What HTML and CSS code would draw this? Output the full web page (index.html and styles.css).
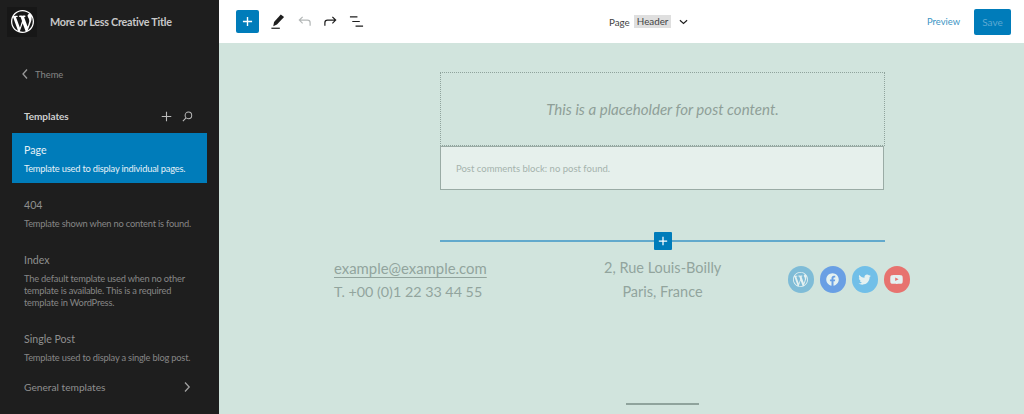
FILE: index.html
```html
<!DOCTYPE html>
<html lang="en">
<head>
<meta charset="utf-8">
<title>Site Editor</title>
<link rel="stylesheet" href="styles.css">
</head>
<body>
<div class="app">
  <aside class="sidebar">
    <div class="brand">
      <div class="logo-box">
        <svg class="logo" viewBox="0 0 20 20"><path fill="#fff" d="M20 10c0-5.51-4.49-10-10-10C4.48 0 0 4.49 0 10c0 5.52 4.48 10 10 10 5.51 0 10-4.48 10-10zM7.78 15.37L4.37 6.22c.55-.02 1.17-.08 1.17-.08.5-.06.44-1.13-.06-1.11 0 0-1.45.11-2.37.11-.18 0-.37 0-.58-.01C4.12 2.69 6.87 1.11 10 1.11c2.33 0 4.45.87 6.05 2.34-.68-.11-1.65.39-1.65 1.58 0 .74.45 1.36.9 2.1.35.61.55 1.36.55 2.46 0 1.49-1.4 5-1.4 5l-3.03-8.37c.54-.02.82-.17.82-.17.5-.05.44-1.25-.06-1.22 0 0-1.44.12-2.38.12-.87 0-2.33-.12-2.33-.12-.5-.03-.56 1.2-.06 1.22l.92.08 1.26 3.41zM17.41 10c.24-.64.74-1.87.43-4.25.7 1.29 1.05 2.71 1.05 4.25 0 3.29-1.73 6.24-4.4 7.78.97-2.59 1.94-5.2 2.92-7.78zM6.1 18.09C3.12 16.65 1.11 13.53 1.11 10c0-1.3.23-2.48.72-3.59C3.25 10.3 4.67 14.2 6.1 18.09zm4.03-6.63l2.58 6.98c-.86.29-1.76.45-2.71.45-.79 0-1.57-.11-2.29-.33.81-2.38 1.62-4.74 2.42-7.1z"/></svg>
      </div>
      <span class="site-title">More or Less Creative Title</span>
    </div>
    <div class="back">
      <svg class="back-icon" viewBox="0 0 8 12"><path d="M6 1.5 2 6l4 4.5" fill="none" stroke="#9a9a9a" stroke-width="1.3"/></svg>
      <span>Theme</span>
    </div>
    <div class="section-head">
      <span>Templates</span>
      <div class="section-actions">
        <svg class="sec-icon" viewBox="0 0 12 12"><path d="M6 .8v10.4M.8 6h10.400" stroke="#bbb" stroke-width="1.200" fill="none"/></svg>
        <svg class="sec-icon" viewBox="0 0 12 12"><circle cx="7" cy="4.800" r="3.600" fill="none" stroke="#bbb" stroke-width="1.100"/><path d="M4.400 7.500 1 11" stroke="#bbb" stroke-width="1.200"/></svg>
      </div>
    </div>
    <ul class="list">
      <li class="item selected"><div class="item-title">Page</div><p class="item-desc">Template used to display individual pages.</p></li>
      <li class="item"><div class="item-title">404</div><p class="item-desc">Template shown when no content is found.</p></li>
      <li class="item"><div class="item-title">Index</div><p class="item-desc">The default template used when no other template is available. This is a required template in WordPress.</p></li>
      <li class="item"><div class="item-title">Single Post</div><p class="item-desc">Template used to display a single blog post.</p></li>
    </ul>
    <div class="general">
      <span>General templates</span>
      <svg class="general-icon" viewBox="0 0 8 12"><path d="M2 1.500 6.200 6 2 10.500" fill="none" stroke="#a0a0a0" stroke-width="1.300"/></svg>
    </div>
  </aside>
  <main class="main">
    <header class="topbar">
      <div class="tools">
        <button class="add"><svg viewBox="0 0 12 12"><path d="M6 1v10M1 6h10" stroke="#fff" stroke-width="1.500" fill="none"/></svg></button>
        <svg class="tool pencil" viewBox="0 0 16 16"><path d="M11.500 .5 15 3.300 7.400 11.300 3.500 13l.8-4.400z" fill="#1e1e1e"/><path d="M1.500 15.200h9" stroke="#1e1e1e" stroke-width="1.300"/></svg>
        <svg class="tool undo" viewBox="0 0 16 16"><path d="M14 12.500V9.200C14 7.500 12.800 6.500 11.200 6.500H2.500M6 3 2.500 6.500 6 10" fill="none" stroke="#b4b8b8" stroke-width="1.300"/></svg>
        <svg class="tool redo" viewBox="0 0 16 16"><path d="M2 12.500V9.200C2 7.500 3.200 6.500 4.800 6.500h8.700M10 3l3.500 3.500L10 10" fill="none" stroke="#1e1e1e" stroke-width="1.300"/></svg>
        <svg class="tool listview" viewBox="0 0 16 16"><path d="M1 3h8M3.500 8h8M7 13h8" fill="none" stroke="#1e1e1e" stroke-width="1.300"/></svg>
      </div>
      <div class="doc">
        <span class="doc-page">Page</span>
        <span class="doc-tag">Header</span>
        <svg class="doc-chev" viewBox="0 0 10 6"><path d="M1 1l4 3.500L9 1" fill="none" stroke="#1e1e1e" stroke-width="1.300"/></svg>
      </div>
      <div class="actions">
        <span class="preview">Preview</span>
        <button class="save">Save</button>
      </div>
    </header>
    <section class="canvas">
      <div class="content">
        <div class="post-placeholder">This is a placeholder for post content.</div>
        <div class="comments">Post comments block: no post found.</div>
      </div>
      <div class="insert-line">
        <button class="insert-btn"><svg viewBox="0 0 12 12"><path d="M6 1v10M1 6h10" stroke="#fff" stroke-width="1.500" fill="none"/></svg></button>
      </div>
      <div class="footer">
        <div class="foot-left">
          <a class="email">example@example.com</a>
          <div class="phone">T. +00 (0)1 22 33 44 55</div>
        </div>
        <div class="foot-mid">
          <div>2, Rue Louis-Boilly</div>
          <div>Paris, France</div>
        </div>
        <div class="social">
          <span class="soc soc-wp"><svg viewBox="0 0 20 20"><path fill="#e4f1f1" d="M20 10c0-5.510-4.490-10-10-10C4.480 0 0 4.490 0 10c0 5.520 4.480 10 10 10 5.510 0 10-4.480 10-10zM7.780 15.370L4.370 6.220c.55-.02 1.170-.08 1.170-.08.5-.06.44-1.130-.06-1.110 0 0-1.450.11-2.370.11-.18 0-.37 0-.58-.01C4.120 2.690 6.870 1.110 10 1.110c2.330 0 4.450.87 6.050 2.340-.68-.11-1.650.39-1.650 1.580 0 .74.45 1.360.9 2.100.35.61.55 1.360.55 2.460 0 1.490-1.400 5-1.400 5l-3.030-8.370c.54-.02.82-.17.82-.17.5-.05.44-1.250-.06-1.220 0 0-1.440.12-2.380.12-.87 0-2.330-.12-2.330-.12-.5-.03-.56 1.200-.06 1.220l.92.08 1.260 3.410zM17.410 10c.24-.64.74-1.870.43-4.250.7 1.290 1.050 2.710 1.050 4.250 0 3.290-1.730 6.240-4.400 7.780.97-2.590 1.940-5.200 2.920-7.780zM6.100 18.090C3.120 16.650 1.110 13.530 1.110 10c0-1.300.23-2.480.72-3.590C3.250 10.300 4.670 14.200 6.100 18.090zm4.030-6.630l2.580 6.980c-.86.29-1.760.45-2.710.45-.79 0-1.570-.11-2.290-.33.81-2.380 1.620-4.740 2.420-7.100z"/></svg></span>
          <span class="soc soc-fb"><svg viewBox="0 0 24 24"><path fill="#e4f1f1" d="M12 2C6.500 2 2 6.500 2 12c0 5 3.700 9.100 8.400 9.900v-7H7.900V12h2.500V9.800c0-2.500 1.500-3.900 3.800-3.900 1.100 0 2.200.2 2.200.2v2.500h-1.300c-1.200 0-1.600.8-1.600 1.600V12h2.800l-.4 2.900h-2.300v7C18.300 21.100 22 17 22 12c0-5.500-4.500-10-10-10z"/></svg></span>
          <span class="soc soc-tw"><svg viewBox="0 0 24 24"><path fill="#e4f1f1" d="M22.230 5.924c-.736.326-1.527.547-2.357.646.847-.508 1.498-1.312 1.804-2.270-.793.47-1.671.812-2.606.996C18.324 4.498 17.257 4 16.077 4c-2.266 0-4.103 1.837-4.103 4.103 0 .322.036.635.106.935C8.670 8.867 5.647 7.234 3.623 4.751c-.353.606-.556 1.311-.556 2.063 0 1.424.724 2.679 1.825 3.415-.673-.021-1.305-.206-1.859-.513v.052c0 1.988 1.414 3.647 3.292 4.023-.344.094-.707.144-1.081.144-.264 0-.521-.026-.772-.074.522 1.630 2.038 2.816 3.833 2.850-1.404 1.100-3.174 1.756-5.096 1.756-.331 0-.658-.019-.979-.057 1.816 1.164 3.973 1.843 6.290 1.843 7.547 0 11.675-6.252 11.675-11.675 0-.178-.004-.355-.012-.531.804-.577 1.499-1.300 2.049-2.123z"/></svg></span>
          <span class="soc soc-yt"><svg viewBox="0 0 24 24"><path fill="#e4f1f1" d="M21.800 8s-.195-1.378-.795-1.985c-.76-.797-1.613-.801-2.004-.847-2.799-.202-6.997-.202-6.997-.202h-.009s-4.198 0-6.997.202c-.39.046-1.242.05-2.003.846C2.395 6.623 2.200 8 2.200 8S2 9.620 2 11.238v1.517c0 1.618.2 3.237.2 3.237s.195 1.378.795 1.985c.761.797 1.760.771 2.205.855 1.600.153 6.800.201 6.800.201s4.203-.006 7.001-.209c.391-.047 1.243-.051 2.004-.847.6-.607.795-1.985.795-1.985s.2-1.618.2-3.237v-1.517C22 9.620 21.800 8 21.800 8zM9.935 14.594l-.001-5.620 5.404 2.820-5.403 2.800z"/></svg></span>
        </div>
      </div>
      <div class="home-bar"></div>
    </section>
  </main>
</div>
</body>
</html>
```
FILE: styles.css
```css
* { box-sizing: border-box; }
html, body { margin: 0; padding: 0; height: 100%; overflow: hidden; }
body { font-family: Lato, "Open Sans", sans-serif; }
.app { display: flex; width: 1024px; height: 414px; }

.sidebar { width: 219px; flex: none; background: #1e1e1e; color: #9a9a9a; }
.brand { display: flex; align-items: center; height: 43px; padding-left: 7px; }
.logo-box { width: 30px; height: 30px; background: #171717; display: flex; align-items: center; justify-content: center; }
.logo { width: 23px; height: 23px; display: block; }
.site-title { margin-left: 13px; font-size: 10.800px; letter-spacing: -.25px; font-weight: 700; color: #c8c8c8; white-space: nowrap; }
.back { display: flex; align-items: center; margin-top: 23px; padding-left: 21px; height: 16px; font-size: 9.400px; color: #858585; }
.back-icon { width: 8px; height: 12px; margin-right: 6px; }
.section-head { display: flex; justify-content: space-between; align-items: center; margin-top: 26px; height: 16px; padding: 0 26px 0 24px; font-size: 10px; font-weight: 700; letter-spacing: -.05px; color: #cfcfcf; }
.section-actions { display: flex; gap: 10px; align-items: center; }
.sec-icon { width: 11px; height: 11px; display: block; }
.list { list-style: none; margin: 9px 0 0; padding: 0 12px; display: flex; flex-direction: column; gap: 5px; }
.item { padding: 10px 12px 0; height: 50px; }
.item:nth-child(3) { height: 74px; }
.item-title { font-size: 10.600px; line-height: 15px; color: #8f8f8f; }
.item-desc { margin: 5px 0 0; font-size: 9.300px; letter-spacing: -.2px; line-height: 12px; color: #868686; }
.selected { background: #007cba; }
.selected .item-title { color: #e6f1f7; }
.selected .item-desc { color: #e6f1f7; }
.general { display: flex; justify-content: space-between; align-items: center; margin-top: 7px; padding: 0 28px 0 24px; height: 16px; font-size: 10.200px; color: #8f8f8f; }
.general-icon { width: 8px; height: 12px; display: block; }

.main { flex: 1; display: flex; flex-direction: column; min-width: 0; }
.topbar { height: 43px; flex: none; background: #fff; display: flex; align-items: center; padding: 0 13px 0 17px; }
.tools { display: flex; align-items: center; width: 360px; }
.add { width: 23px; height: 23px; border: 0; padding: 0; border-radius: 2px; background: #007cba; display: flex; align-items: center; justify-content: center; }
.add svg { width: 11px; height: 11px; display: block; }
.tool { width: 15px; height: 15px; display: block; }
.pencil { margin-left: 11px; }
.undo { margin-left: 12px; }
.redo { margin-left: 11px; }
.listview { margin-left: 11px; }
.doc { display: flex; align-items: center; margin-left: 13px; font-size: 9.800px; color: #444; }
.doc-page { margin-right: 4px; }
.doc-tag { background: #dfdfdf; padding: 0 3px; line-height: 13px; }
.doc-chev { width: 9px; height: 6px; margin-left: 8px; }
.actions { margin-left: auto; display: flex; align-items: center; }
.preview { font-size: 9.400px; color: #3b95c4; margin-right: 14px; }
.save { width: 37px; height: 26px; border: 0; padding: 0; border-radius: 2px; background: #007cba; color: #5da9d2; font: 10px Lato, sans-serif; }

.canvas { position: relative; flex: 1; background: #d1e4dd; padding: 29px 0 0 221px; color: #92a49d; }
.content { width: 445px; }
.post-placeholder { height: 74px; border: 1px dotted #8fa39c; display: flex; align-items: center; justify-content: center; font-size: 15.100px; font-style: italic; color: #8f9f98; }
.comments { height: 44px; width: 444px; border: 1px solid #9aaba5; background: #e6f0ec; display: flex; align-items: center; padding-left: 15px; font-size: 9.500px; color: #a5b3ad; }
.insert-line { position: relative; width: 445px; height: 2px; margin-top: 50px; background: #62a9cc; }
.insert-btn { position: absolute; left: 214px; top: -8px; width: 18px; height: 18px; border: 0; padding: 0; border-radius: 1px; background: #007cba; display: flex; align-items: center; justify-content: center; }
.insert-btn svg { width: 10px; height: 10px; display: block; }
.footer { display: grid; grid-template-columns: 270px 117px 1fr; margin: 14px 0 0 -106px; width: 576px; font-size: 14.500px; line-height: 24px; }
.email { display: block; font-size: 14.900px; text-decoration: underline; text-underline-offset: 3px; text-decoration-thickness: 1px; }
.phone { font-size: 14.300px; }
.foot-mid { text-align: center; white-space: nowrap; }
.social { display: flex; gap: 5.500px; justify-content: flex-end; margin-top: 10px; height: 27px; }
.soc { width: 26.500px; height: 26.500px; border-radius: 50%; display: flex; align-items: center; justify-content: center; }
.soc svg { width: 15px; height: 15px; display: block; }
.soc-wp { background: #7fbcd7; }
.soc-fb { background: #699fe4; }
.soc-tw { background: #71bfe8; }
.soc-yt { background: #e7736f; }
.home-bar { position: absolute; left: 407px; bottom: 9px; width: 73px; height: 2px; background: #8fa39c; }
```
